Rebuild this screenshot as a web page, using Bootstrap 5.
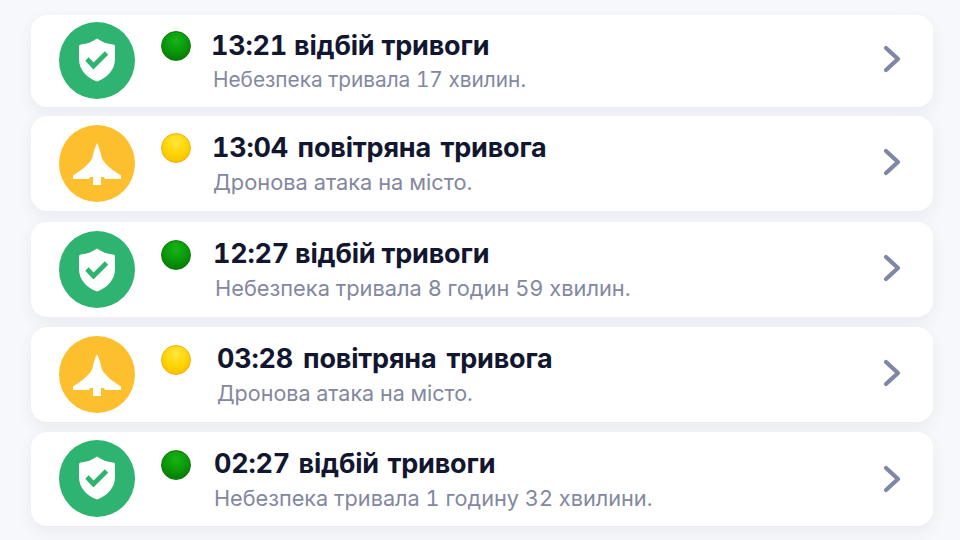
<!DOCTYPE html>
<html lang="uk">
<head>
<meta charset="utf-8">
<title>Тривоги</title>
<link rel="stylesheet" href="https://cdn.jsdelivr.net/npm/bootstrap@5.3.0/dist/css/bootstrap.min.css">
<style>
html,body{height:540px;overflow:hidden}
body{background:#f7f8fb;font-family:Inter,"Noto Sans",sans-serif}
.feed{padding:15px 27px 0 31px}
.alert-row{background:#fff;border-radius:16px;box-shadow:0 6px 16px rgba(60,70,110,.07);padding-left:28px;padding-right:32px}
.r1{height:92px;margin-bottom:9px}
.r2{height:95px;margin-bottom:11px}
.r3{height:95px;margin-bottom:10px}
.r4{height:95px;margin-bottom:10px}
.r5{height:94px}
.disc{width:76px;height:77px;border-radius:50%;flex:none}
.r1 .disc,.r5 .disc{margin-bottom:2px}
.disc-ok{background:#2eb371}
.disc-warn{background:#fdbf2d}
.disc svg{display:block}
.chev{flex:none;margin-bottom:4px}
.r2 .chev{margin-bottom:3px}
.r5 .chev{margin-bottom:0}
.lamp{width:30px;height:30px;border-radius:50%;flex:none;margin-left:26px;align-self:flex-start}
.lamp-g{background:radial-gradient(circle at 50% 30%,#18b418 0,#0a9a0a 45%,#066c06 100%);border:1px solid #0a7a0a}
.lamp-y{background:radial-gradient(circle at 50% 30%,#ffe640 0,#ffd400 50%,#f7b500 100%);border:1px solid #f0b010}
.r1 .lamp{margin-top:16px}.r2 .lamp{margin-top:17px}.r3 .lamp{margin-top:18px}.r4 .lamp{margin-top:18px}.r5 .lamp{margin-top:18px}
.txt{margin-left:21px}
.r2 .txt{margin-left:22px}.r3 .txt{margin-left:24px}.r4 .txt{margin-left:26px}.r5 .txt{margin-left:23px}
.ttl{font-size:27px;font-weight:700;letter-spacing:-.2px;line-height:32px;color:#12172f;white-space:nowrap;font-variant-numeric:tabular-nums;word-spacing:3px}
.r1 .ttl{word-spacing:0;margin-left:-1px}
.r2 .ttl{word-spacing:2.500px;margin-left:-1px}
.r3 .ttl{word-spacing:-1px;margin-left:-2px}
.r5 .ttl{word-spacing:1.500px}
.sub{font-size:21px;line-height:26px;color:#83889f;margin-top:5px;white-space:nowrap;font-variant-numeric:tabular-nums}
.r1 .sub{font-size:20.800px;margin-left:1px}
.r2 .sub{font-size:21.800px}
.r3 .sub{font-size:21.800px}
.r4 .sub{font-size:21.500px}
.r5 .sub{font-size:21.700px}
</style>
</head>
<body>
<div class="feed">
  <div class="alert-row r1 d-flex align-items-center">
    <div class="disc disc-ok d-flex align-items-center justify-content-center">
      <svg width="44" height="46" viewBox="0 0 44 46"><path d="M22 1.500 C27 5 32 7 38 7.500 Q40 7.700 40 9.500 V22 C40 33 32 41 22 44.500 C12 41 4 33 4 22 V9.500 Q4 7.700 6 7.500 C12 7 17 5 22 1.500Z" fill="#fff"/><path d="M12 22 L18.500 29 L31.500 16" fill="none" stroke="#2eb371" stroke-width="4.800"/></svg>
    </div>
    <span class="lamp lamp-g"></span>
    <div class="txt flex-grow-1"><div class="ttl">13:21 відбій тривоги</div><div class="sub">Небезпека тривала 17 хвилин.</div></div>
    <svg class="chev" width="18" height="28" viewBox="0 0 18 28"><path d="M3 3 L15 14 L3 25" fill="none" stroke="#7f86a6" stroke-width="4.200" stroke-linecap="round" stroke-linejoin="round"/></svg>
  </div>
  <div class="alert-row r2 d-flex align-items-center">
    <div class="disc disc-warn d-flex align-items-center justify-content-center">
      <svg width="50" height="44" viewBox="0 0 50 44"><path d="M25 1 C27 5 28.500 10 29.500 15 C31 20 37 26 49 33.500 V37 H33 L32 35 H29 V43 H21 V35 H18 L17 37 H1 V33.500 C13 26 19 20 20.500 15 C21.500 10 23 5 25 1Z" fill="#fff"/></svg>
    </div>
    <span class="lamp lamp-y"></span>
    <div class="txt flex-grow-1"><div class="ttl">13:04 повітряна тривога</div><div class="sub">Дронова атака на місто.</div></div>
    <svg class="chev" width="18" height="28" viewBox="0 0 18 28"><path d="M3 3 L15 14 L3 25" fill="none" stroke="#7f86a6" stroke-width="4.200" stroke-linecap="round" stroke-linejoin="round"/></svg>
  </div>
  <div class="alert-row r3 d-flex align-items-center">
    <div class="disc disc-ok d-flex align-items-center justify-content-center">
      <svg width="44" height="46" viewBox="0 0 44 46"><path d="M22 1.500 C27 5 32 7 38 7.500 Q40 7.700 40 9.500 V22 C40 33 32 41 22 44.500 C12 41 4 33 4 22 V9.500 Q4 7.700 6 7.500 C12 7 17 5 22 1.500Z" fill="#fff"/><path d="M12 22 L18.500 29 L31.500 16" fill="none" stroke="#2eb371" stroke-width="4.800"/></svg>
    </div>
    <span class="lamp lamp-g"></span>
    <div class="txt flex-grow-1"><div class="ttl">12:27 відбій тривоги</div><div class="sub">Небезпека тривала 8 годин 59 хвилин.</div></div>
    <svg class="chev" width="18" height="28" viewBox="0 0 18 28"><path d="M3 3 L15 14 L3 25" fill="none" stroke="#7f86a6" stroke-width="4.200" stroke-linecap="round" stroke-linejoin="round"/></svg>
  </div>
  <div class="alert-row r4 d-flex align-items-center">
    <div class="disc disc-warn d-flex align-items-center justify-content-center">
      <svg width="50" height="44" viewBox="0 0 50 44"><path d="M25 1 C27 5 28.500 10 29.500 15 C31 20 37 26 49 33.500 V37 H33 L32 35 H29 V43 H21 V35 H18 L17 37 H1 V33.500 C13 26 19 20 20.500 15 C21.500 10 23 5 25 1Z" fill="#fff"/></svg>
    </div>
    <span class="lamp lamp-y"></span>
    <div class="txt flex-grow-1"><div class="ttl">03:28 повітряна тривога</div><div class="sub">Дронова атака на місто.</div></div>
    <svg class="chev" width="18" height="28" viewBox="0 0 18 28"><path d="M3 3 L15 14 L3 25" fill="none" stroke="#7f86a6" stroke-width="4.200" stroke-linecap="round" stroke-linejoin="round"/></svg>
  </div>
  <div class="alert-row r5 d-flex align-items-center">
    <div class="disc disc-ok d-flex align-items-center justify-content-center">
      <svg width="44" height="46" viewBox="0 0 44 46"><path d="M22 1.500 C27 5 32 7 38 7.500 Q40 7.700 40 9.500 V22 C40 33 32 41 22 44.500 C12 41 4 33 4 22 V9.500 Q4 7.700 6 7.500 C12 7 17 5 22 1.500Z" fill="#fff"/><path d="M12 22 L18.500 29 L31.500 16" fill="none" stroke="#2eb371" stroke-width="4.800"/></svg>
    </div>
    <span class="lamp lamp-g"></span>
    <div class="txt flex-grow-1"><div class="ttl">02:27 відбій тривоги</div><div class="sub">Небезпека тривала 1 годину 32 хвилини.</div></div>
    <svg class="chev" width="18" height="28" viewBox="0 0 18 28"><path d="M3 3 L15 14 L3 25" fill="none" stroke="#7f86a6" stroke-width="4.200" stroke-linecap="round" stroke-linejoin="round"/></svg>
  </div>
</div>
<script src="https://cdn.jsdelivr.net/npm/bootstrap@5.3.0/dist/js/bootstrap.bundle.min.js"></script>
</body>
</html>
